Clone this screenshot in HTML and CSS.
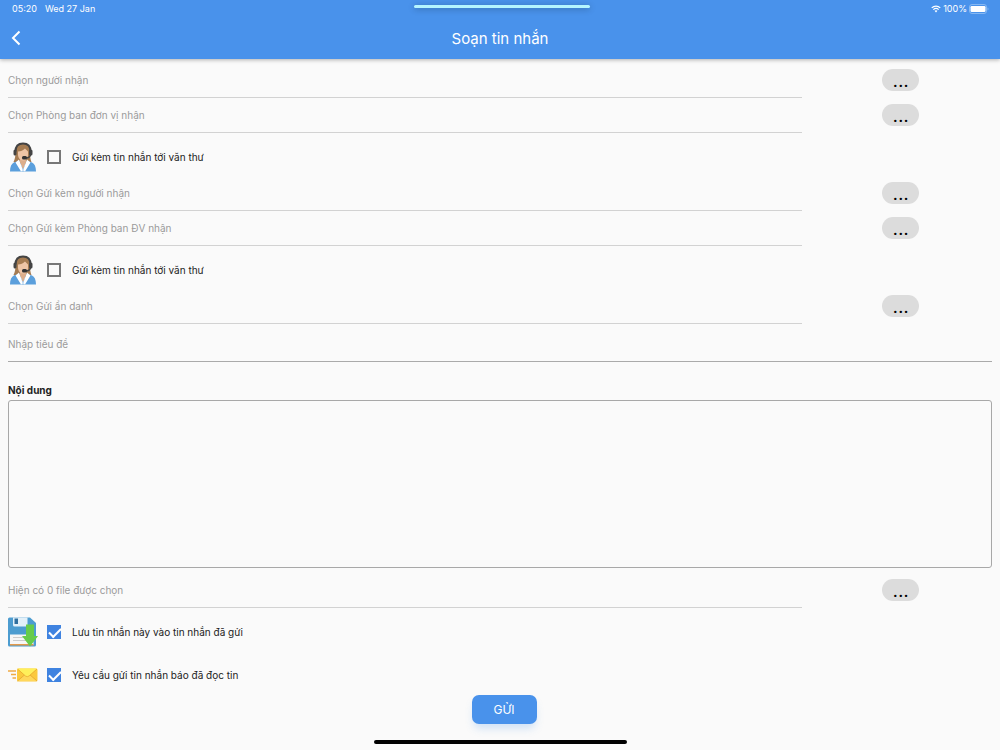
FILE: index.html
```html
<!DOCTYPE html>
<html lang="vi">
<head>
    <meta charset="UTF-8">
    <meta name="viewport" content="width=device-width, initial-scale=1.0">
    <title>Soạn tin nhắn</title>
    <link rel="stylesheet" href="styles.css">
</head>
<body>
    <svg class="sprite" aria-hidden="true">
        <symbol id="icon-agent" viewBox="0 0 30 30">
            <path d="M7.500 10C7.500 4 10.500 1.500 15 1.500S22 4 22 10c0 5 .5 7 1.500 10l-4 2H10l-4.500-2c1.500-3 2-6 2-10z" fill="#a67c52"/>
            <path d="M12 14h6v6l-3 8-3-8z" fill="#dcae8c"/>
            <path d="M10 9.500c3 0 5-1 7-3l3 3v3c0 4-2 6-5 6s-5-3-5-6z" fill="#eec5a6"/>
            <path d="M2 29.500c0-5 1.500-8 4-9l5-2 4 9 4-9 5 2c2.500 1 4 4 4 9z" fill="#5b9fdc"/>
            <path d="M11 17.500l4 11-2 1-5.500-9zM19 17.500l-4 11 2 1 5.500-9z" fill="#fff"/>
            <path d="M7.500 9.500C7.500 4 10.500 1.500 15 1.500s7.500 2.500 7.500 8" fill="none" stroke="#444" stroke-width="2"/>
            <rect x="5.500" y="7.500" width="3" height="6" rx="1.500" fill="#444"/>
            <rect x="21" y="7.500" width="3.500" height="6" rx="1.500" fill="#444"/>
            <path d="M22.500 12c0 3-2 4-5 4" fill="none" stroke="#444" stroke-width="1.500"/>
            <rect x="14" y="14" width="5" height="3.500" rx="1.500" fill="#333"/>
        </symbol>
    </svg>

    <header class="header">
        <div class="status-bar">
            <span class="clock">05:20</span>
            <span>Wed 27 Jan</span>
            <div class="status-right">
                <svg width="10" height="8" viewBox="0 0 11 9" fill="none" stroke="#fff" stroke-width="1.400">
                    <path d="M.7 3.200C3.400.5 7.600.5 10.300 3.200M2.500 5.200c1.700-1.600 4.300-1.600 6 0"/>
                    <path d="M3.900 6.500c.9-.8 2.300-.8 3.200 0L5.500 8.300z" fill="#fff" stroke="none"/>
                </svg>
                <span>100%</span>
                <svg width="20" height="10" viewBox="0 0 20 10">
                    <rect x=".5" y=".5" width="17" height="9" rx="2.500" fill="none" stroke="#86b8f2"/>
                    <rect x="1.500" y="2" width="15" height="6" rx="1.200" fill="#fff"/>
                    <path d="M18.500 3.500v3q1-.4 1-1.500t-1-1.500z" fill="#86b8f2"/>
                </svg>
            </div>
        </div>
        <div class="nav-bar">
            <button class="back" type="button" aria-label="Quay lại">
                <svg width="10" height="16" viewBox="0 0 10 16" fill="none" stroke="#fff" stroke-width="2">
                    <path d="M8.500 1.500L2 8l6.500 6.500"/>
                </svg>
            </button>
            <h1>Soạn tin nhắn</h1>
        </div>
        <div class="top-handle"></div>
    </header>

    <form class="form">
        <div class="picker">
            <input type="text" placeholder="Chọn người nhận" aria-label="Chọn người nhận" readonly>
            <button class="more" type="button">...</button>
        </div>
        <div class="picker">
            <input type="text" placeholder="Chọn Phòng ban đơn vị nhận" aria-label="Chọn Phòng ban đơn vị nhận" readonly>
            <button class="more" type="button">...</button>
        </div>
        <label class="check">
            <svg class="icon"><use href="#icon-agent"/></svg>
            <input type="checkbox">
            <span>Gửi kèm tin nhắn tới văn thư</span>
        </label>
        <div class="picker">
            <input type="text" placeholder="Chọn Gửi kèm người nhận" aria-label="Chọn Gửi kèm người nhận" readonly>
            <button class="more" type="button">...</button>
        </div>
        <div class="picker">
            <input type="text" placeholder="Chọn Gửi kèm Phòng ban ĐV nhận" aria-label="Chọn Gửi kèm Phòng ban ĐV nhận" readonly>
            <button class="more" type="button">...</button>
        </div>
        <label class="check">
            <svg class="icon"><use href="#icon-agent"/></svg>
            <input type="checkbox">
            <span>Gửi kèm tin nhắn tới văn thư</span>
        </label>
        <div class="picker">
            <input type="text" placeholder="Chọn Gửi ẩn danh" aria-label="Chọn Gửi ẩn danh" readonly>
            <button class="more" type="button">...</button>
        </div>

        <input class="subject" type="text" placeholder="Nhập tiêu đề" aria-label="Nhập tiêu đề">
        <label class="content-label" for="content">Nội dung</label>
        <textarea class="content" id="content"></textarea>

        <div class="picker">
            <input type="text" placeholder="Hiện có 0 file được chọn" aria-label="Hiện có 0 file được chọn" readonly>
            <button class="more" type="button">...</button>
        </div>
        <label class="check">
            <svg class="icon" viewBox="0 0 30 30">
                <path d="M1.500.5H22L28 6v22q0 1.500-1.500 1.500h-25Q0 29.500 0 28V2Q0 .5 1.500.5z" fill="#4c9cd0"/>
                <path d="M5 .5h14.500V8q0 1.500-1.500 1.500H6.500Q5 9.500 5 8z" fill="#e2f0f9"/>
                <rect x="6.500" y="1.500" width="3.500" height="5.500" fill="#2f6f9f"/>
                <rect x="2" y="17.500" width="23.500" height="10.500" fill="#f6f6f6"/>
                <path d="M5 20.500h15M5 23.500h15" stroke="#ccc"/>
                <rect x="2" y="27" width="23.500" height="1.500" fill="#e39a4b"/>
                <path d="M18 7.500h8V19h4l-8 10.500L14 19h4z" fill="#66cc4b"/>
            </svg>
            <input type="checkbox" checked>
            <span>Lưu tin nhắn này vào tin nhắn đã gửi</span>
        </label>
        <label class="check">
            <svg class="icon" viewBox="0 0 30 30">
                <path d="M0 11h8M3 14.500h5M4.500 18h3.500" stroke="#f0aa45" stroke-width="1.500"/>
                <rect x="9" y="8.500" width="20.500" height="13" rx="1.500" fill="#fbc93d"/>
                <path d="M9.500 21l7-6.500h5l7.500 6.500z" fill="#ffd75a"/>
                <path d="M9.500 21l7.500-6.500M29 21l-7.500-6.500" stroke="#e5a52d" stroke-width=".8"/>
                <path d="M9.500 8.500H29L21 16q-1.700 1.400-3.500 0z" fill="#fff05a"/>
                <path d="M9.500 9l8 7q1.700 1.400 3.500 0l8-7" fill="none" stroke="#e5a52d" stroke-width=".7"/>
            </svg>
            <input type="checkbox" checked>
            <span>Yêu cầu gửi tin nhắn báo đã đọc tin</span>
        </label>
        <button class="send" type="submit">GỬI</button>
    </form>
    <div class="home-indicator"></div>
</body>
</html>
```
FILE: styles.css
```css
* {
    box-sizing: border-box;
}
body {
    position: relative;
    display: flex;
    flex-direction: column;
    min-height: 100vh;
    margin: 0;
    font-family: Inter, "Liberation Sans", sans-serif;
    font-size: 10px;
    color: #222;
    background-color: #fafafa;
}
input, textarea, button {
    font: inherit;
    color: inherit;
}
button {
    padding: 0;
    border: none;
    cursor: pointer;
}
.sprite {
    position: absolute;
    width: 0;
    height: 0;
}
.header {
    position: relative;
    color: #fff;
    background-color: #4992eb;
    box-shadow: 0 1px 4px rgba(0, 0, 0, 0.3);
}
.status-bar {
    display: flex;
    align-items: center;
    gap: 8px;
    height: 17px;
    padding: 0 11px 0 12px;
    font-size: 9px;
}
.status-right {
    display: flex;
    align-items: center;
    gap: 2px;
    margin-left: auto;
}
.nav-bar {
    display: grid;
    grid-template-columns: 20px 1fr 20px;
    align-items: center;
    height: 42px;
    padding: 0 11px;
}
.nav-bar h1 {
    margin: 0;
    font-size: 15px;
    font-weight: 400;
    text-align: center;
}
.back {
    display: flex;
    background: none;
}
.top-handle {
    position: absolute;
    top: 5px;
    left: 50%;
    width: 176px;
    height: 3px;
    margin-left: -86px;
    border-radius: 2px;
    background-color: #b5f5ff;
    box-shadow: 0 1px 6px rgba(0, 0, 0, 0.3);
}
.form {
    display: flex;
    flex-direction: column;
    padding: 4px 0 0 8px;
}
.picker {
    display: grid;
    grid-template-columns: 4fr 1fr;
    height: 35px;
}
.picker input, .subject {
    min-width: 0;
    padding: 0;
    border: none;
    border-bottom: 1px solid #d2d2d2;
    border-radius: 0;
    background: none;
    outline: none;
}
::placeholder {
    color: #9b9b9b;
    opacity: 1;
}
.more {
    place-self: center;
    width: 37px;
    height: 22px;
    margin-bottom: 2px;
    border-radius: 11px;
    background-color: #dcdcdc;
    color: #000;
    font-family: Roboto, sans-serif;
    font-size: 20px;
    line-height: 22px;
}
.check {
    display: flex;
    align-items: center;
    height: 43px;
    padding-top: 5px;
}
.check .icon {
    width: 30px;
    height: 30px;
}
.check input {
    display: grid;
    place-items: center;
    width: 14px;
    height: 14px;
    margin: 0 11px 0 9px;
    border: 2px solid #777;
    appearance: none;
}
.check input:checked {
    border-color: #3f83e0;
    background-color: #3f83e0;
}
.check input:checked::after {
    content: "";
    width: 10px;
    height: 5px;
    border-left: 2px solid #fff;
    border-bottom: 2px solid #fff;
    transform: translateY(-1px) rotate(-45deg);
}
.subject {
    height: 38px;
    margin-right: 8px;
    padding-top: 2px;
    border-bottom-color: #aaa;
}
.content-label {
    margin-top: 20px;
    line-height: 16px;
    font-weight: 700;
}
.content {
    height: 168px;
    margin: 2px 8px 5px 0;
    padding: 8px;
    border: 1px solid #a8a8a8;
    border-radius: 3px;
    background: none;
    resize: none;
}
.send {
    align-self: center;
    width: 65px;
    height: 29px;
    margin-top: 1px;
    border-radius: 7px;
    background-color: #4992eb;
    color: #fff;
    font-size: 12px;
    box-shadow: 0 6px 8px -2px rgba(73, 146, 235, 0.25);
}
.home-indicator {
    width: 253px;
    height: 4px;
    margin: auto auto 6px;
    border-radius: 2px;
    background-color: #000;
}
```
